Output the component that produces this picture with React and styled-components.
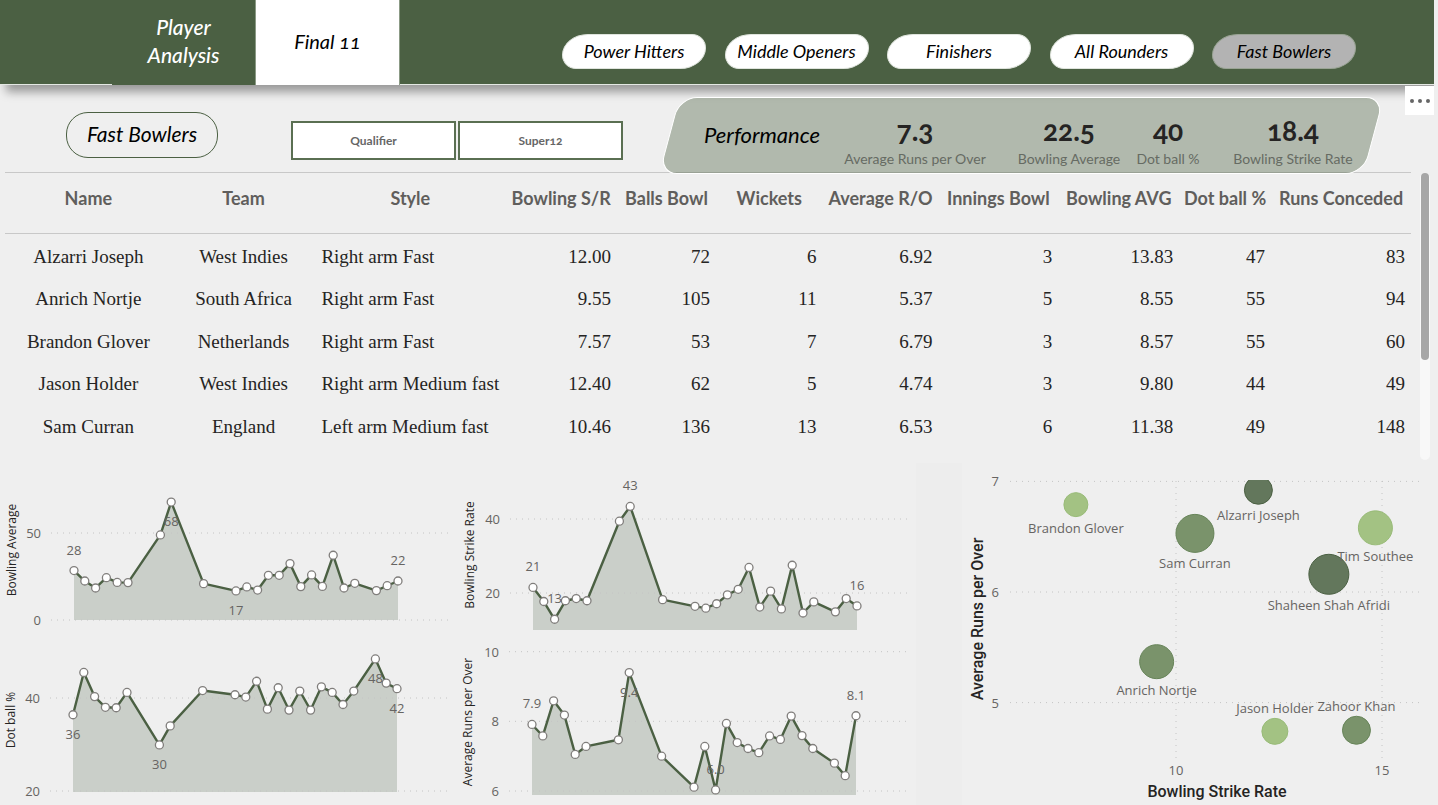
import React from "react";
import styled, { createGlobalStyle } from "styled-components";

const HUMANIST = 'Lato, "Open Sans", sans-serif';
const CHART = '"Open Sans", "Noto Sans", sans-serif';
const GREEN = "#4b6043";

const Global = createGlobalStyle`
  * { box-sizing: border-box; }
  body { margin: 0; background: #efefef; overflow-x: hidden; }
  button { margin: 0; padding: 0; cursor: pointer; }
`;

const Page = styled.div`
  padding-right: 4px;
  background: #efefef;
  font-family: ${HUMANIST};
  overflow: hidden;
`;

const Header = styled.header`
  position: relative;
  display: flex;
  justify-content: space-between;
  height: 85px;
  padding: 0 78px 0 112px;
  background: ${GREEN};
  border-bottom: 1px solid #e4e8e3;
  box-shadow: 6px 7px 9px rgba(0, 0, 0, 0.36);
  clip-path: inset(0 0 -30px 0);
`;

const Tabs = styled.nav`
  display: flex;
  margin-bottom: -1px;
`;

const Tab = styled.button`
  width: 144px;
  padding: 0 32px 4px;
  border: 0;
  border-right: 1px solid #8b9a85;
  background: ${(p) => (p.$active ? "#fff" : GREEN)};
  color: ${(p) => (p.$active ? "#000" : "#fff")};
  font: italic ${(p) => (p.$active ? 400 : 500)} ${(p) => (p.$active ? 20 : 21)}px / 28px ${HUMANIST};
  font-variant-numeric: oldstyle-nums;
`;

const RoleNav = styled.nav`
  display: flex;
  justify-content: space-between;
  align-items: flex-start;
  width: 794px;
  padding-top: 34px;
`;

const RoleButton = styled.button`
  width: 144px;
  height: 35px;
  border: 1px solid ${(p) => (p.$active ? "#9aa495" : "#dfe4dd")};
  border-radius: 26px 14px 26px 14px / 21px 14px 21px 14px;
  background: ${(p) => (p.$active ? "#b3b3b3" : "#fff")};
  color: #000;
  font: italic 400 18px / 33px ${HUMANIST};
  white-space: nowrap;
`;

const Toolbar = styled.section`
  position: relative;
  display: flex;
  align-items: flex-start;
  height: 87px;
  padding: 12px 54px 0 66px;
`;

const Title = styled.h1`
  width: 152px;
  height: 46px;
  margin: 15px 73px 0 0;
  border: 1px solid ${GREEN};
  border-radius: 22px;
  color: #000;
  font: italic 400 21px / 42px ${HUMANIST};
  text-align: center;
`;

const Slicer = styled.div`
  display: flex;
  gap: 2px;
  margin-top: 24px;
`;

const SlicerButton = styled.button`
  width: 165px;
  height: 39px;
  border: 2px solid #5a6f52;
  background: #fff;
  color: #666;
  font: 700 12px / 35px ${HUMANIST};
  font-variant-numeric: oldstyle-nums;
`;

const Performance = styled.div`
  position: relative;
  z-index: 1;
  display: flex;
  align-items: flex-start;
  width: 717px;
  height: 77px;
  margin-left: auto;
  padding: 17px 24px 0 41px;
  &::before {
    content: "";
    position: absolute;
    z-index: -1;
    inset: 0 6px;
    border: 1px solid #fff;
    border-radius: 18px;
    background: rgba(75, 96, 67, 0.38);
    transform: skewX(-15deg);
  }
`;

const PerformanceTitle = styled.h2`
  width: 138px;
  margin: 0;
  color: #000;
  font: italic 400 22px / 42px ${HUMANIST};
`;

const Kpi = styled.div`
  width: ${(p) => p.$width}px;
  margin-left: ${(p) => p.$gap}px;
  text-align: center;
  white-space: nowrap;
`;

const KpiValue = styled.div`
  color: #252423;
  font: 700 28px / 32px ${HUMANIST};
  font-variant-numeric: oldstyle-nums;
`;

const KpiLabel = styled.div`
  color: #666b63;
  font: 400 14px / 26px ${HUMANIST};
`;

const MoreButton = styled.button`
  position: absolute;
  top: 1px;
  right: 0;
  display: flex;
  align-items: center;
  justify-content: center;
  gap: 4px;
  width: 29px;
  height: 29px;
  border: 0;
  background: #fff;
`;

const Dot = styled.span`
  width: 4px;
  height: 4px;
  border-radius: 2px;
  background: #666;
`;

const TableSection = styled.section`
  display: flex;
  height: 291px;
  padding: 0 4px 3px 5px;
`;

const Table = styled.table`
  flex: 1;
  align-self: flex-start;
  table-layout: fixed;
  border-collapse: separate;
  border-spacing: 0;
  border-top: 1px solid #c8c8c8;
`;

const Th = styled.th`
  height: 61px;
  padding: 14px 0 0;
  border-bottom: 1px solid #c8c8c8;
  color: #605e5c;
  font: 700 18px / 22px ${HUMANIST};
  vertical-align: top;
  white-space: nowrap;
`;

const Tr = styled.tr`
  height: 42px;
  &:nth-child(even) { height: 43px; }
`;

const Td = styled.td`
  padding: 13px 6px 0;
  color: #252423;
  font: 400 19px / 20px "Liberation Serif", serif;
  text-align: ${(p) => p.$align};
  vertical-align: top;
  white-space: nowrap;
`;

const ScrollTrack = styled.div`
  width: 10px;
  margin: 1px 0 0 9px;
  padding: 0 1px;
  border-radius: 5px;
  background: #f8f8f8;
`;

const ScrollThumb = styled.div`
  height: 187px;
  border-radius: 4px;
  background: #a6a6a6;
`;

const Charts = styled.section`
  display: grid;
  grid-template-columns: 916fr 518fr;
`;

const LineGrid = styled.div`
  display: grid;
  grid-template-columns: 1fr 1fr;
`;

const ScatterCell = styled.div`
  padding-left: 46px;
  background: #ededed;
`;

const ChartSvg = styled.svg`
  display: block;
  width: 100%;
  height: ${(p) => p.$height}px;
  background: #efefef;
  font-family: ${CHART};
  font-size: 13px;
`;

const Gridline = styled.line`
  stroke: #c4c4c4;
  stroke-dasharray: 1 5;
`;

const ChartText = styled.text`
  fill: #666462;
`;

const AxisTitle = styled.text`
  fill: #252423;
  font-size: 12px;
  text-anchor: middle;
`;

const BoldAxisTitle = styled(AxisTitle)`
  font-family: Roboto, sans-serif;
  font-size: 16px;
  font-weight: 500;
`;

const roles = ["Power Hitters", "Middle Openers", "Finishers", "All Rounders", "Fast Bowlers"];

const kpis = [
  { value: "7.3", label: "Average Runs per Over", width: 146, gap: 0 },
  { value: "22.5", label: "Bowling Average", width: 106, gap: 28 },
  { value: "40", label: "Dot ball %", width: 64, gap: 14 },
  { value: "18.4", label: "Bowling Strike Rate", width: 124, gap: 31 },
];

const columns = [
  ["Name", 167, "center"],
  ["Team", 144, "center"],
  ["Style", 188, "left"],
  ["Bowling S/R", 112, "right"],
  ["Balls Bowl", 99, "right"],
  ["Wickets", 107, "right"],
  ["Average R/O", 116, "right"],
  ["Innings Bowl", 120, "right"],
  ["Bowling AVG", 121, "right"],
  ["Dot ball %", 92, "right"],
  ["Runs Conceded", 140, "right"],
];

const rows = [
  ["Alzarri Joseph", "West Indies", "Right arm Fast", "12.00", "72", "6", "6.92", "3", "13.83", "47", "83"],
  ["Anrich Nortje", "South Africa", "Right arm Fast", "9.55", "105", "11", "5.37", "5", "8.55", "55", "94"],
  ["Brandon Glover", "Netherlands", "Right arm Fast", "7.57", "53", "7", "6.79", "3", "8.57", "55", "60"],
  ["Jason Holder", "West Indies", "Right arm Medium fast", "12.40", "62", "5", "4.74", "3", "9.80", "44", "49"],
  ["Sam Curran", "England", "Left arm Medium fast", "10.46", "136", "13", "6.53", "6", "11.38", "49", "148"],
];

// Match numbers in which the bowlers of this group played.
const matches = [0, 1, 2, 3, 4, 5, 8, 9, 12, 15, 16, 17, 18, 19, 20, 21, 22, 23, 24, 25, 26, 28, 29, 30];

const lineCharts = [
  {
    title: "Bowling Average", height: 177, left: 74, titleX: 16, titleY: 87, ticks: [50, 0],
    origin: 157, originValue: 0, unit: 1.74, base: 157,
    values: [28.4, 22.4, 18.4, 24.3, 21.6, 21.5, 48.9, 67.8, 20.9, 16.7, 19, 17.2, 25.7, 25.7, 32.4, 19.2, 25.9, 19.3, 37.2, 18.4, 21.1, 16.9, 19.7, 22.4],
    labels: [[0, "28", -1], [7, "68", 1], [9, "17", 1], [23, "22", -1]],
  },
  {
    title: "Bowling Strike Rate", height: 177, left: 75, titleX: 16, titleY: 92, ticks: [40, 20],
    origin: 130, originValue: 20, unit: 3.7, base: 167,
    values: [21.5, 17.7, 12.9, 17.9, 18.5, 17.9, 39.4, 43.4, 18.2, 16.4, 15.9, 17.1, 19.5, 21, 26.9, 16.2, 20.5, 15.7, 27.5, 14.6, 17.6, 14.9, 18.5, 16.5],
    labels: [[0, "21", -1], [2, "13", -1], [7, "43", -1], [23, "16", -1]],
  },
  {
    title: "Dot ball %", height: 165, left: 73, titleX: 15, titleY: 80, ticks: [40, 20],
    origin: 151, originValue: 20, unit: 4.65, base: 152,
    values: [36.4, 45.5, 40.3, 38, 37.9, 41.2, 29.9, 34, 41.6, 40.7, 40.2, 43.6, 37.6, 42.2, 37.4, 41.5, 37.4, 42.4, 41.2, 38.6, 41.5, 48.4, 43.2, 42],
    labels: [[0, "36", 1], [6, "30", 1], [21, "48", 1], [23, "42", 1]],
  },
  {
    title: "Average Runs per Over", height: 165, left: 74, titleX: 14, titleY: 82, ticks: [10, 8, 6],
    origin: 151, originValue: 6, unit: 34.83, base: 155,
    values: [7.91, 7.58, 8.59, 8.18, 7.05, 7.28, 7.47, 9.4, 7, 6.11, 7.28, 6.03, 7.94, 7.39, 7.22, 7.1, 7.58, 7.48, 8.15, 7.59, 7.22, 6.8, 6.44, 8.16],
    labels: [[0, "7.9", -1], [7, "9.4", 1], [11, "6.0", -1], [23, "8.1", -1]],
  },
];

const LIGHT = ["#a3c283", "#98bb77"];
const MID = ["#7a936b", "#678459"];
const DARK = ["#63775c", "#4b6043"];

const bubbles = [
  { name: "Brandon Glover", x: 7.57, y: 6.79, r: 12, tone: LIGHT },
  { name: "Sam Curran", x: 10.46, y: 6.53, r: 19, tone: MID },
  { name: "Alzarri Joseph", x: 12, y: 6.92, r: 14, tone: DARK },
  { name: "Tim Southee", x: 14.84, y: 6.58, r: 17, tone: LIGHT },
  { name: "Shaheen Shah Afridi", x: 13.71, y: 6.16, r: 20, tone: DARK },
  { name: "Anrich Nortje", x: 9.53, y: 5.37, r: 17, tone: MID },
  { name: "Jason Holder", x: 12.4, y: 4.74, r: 13, tone: LIGHT, above: true },
  { name: "Zahoor Khan", x: 14.38, y: 4.75, r: 14, tone: MID, above: true },
];

function LineChart({ title, height, left, titleX, titleY, ticks, origin, originValue, unit, base, values, labels }) {
  const y = (v) => origin - (v - originValue) * unit;
  const points = values.map((v, i) => [left + matches[i] * 10.8, y(v)]);
  const line = points.map((p) => p.join(",")).join(" ");
  const last = points[points.length - 1][0];
  return (
    <ChartSvg $height={height} viewBox={`0 0 458 ${height}`} role="img" aria-label={title}>
      <polygon points={`${left},${base} ${line} ${last},${base}`} fill="#4b6043" fillOpacity="0.22" />
      {ticks.map((t) => (
        <g key={t}>
          <Gridline x1={left - 23} x2={left + 378} y1={y(t)} y2={y(t)} />
          <ChartText x={left - 33} y={y(t) + 5} textAnchor="end">{t}</ChartText>
        </g>
      ))}
      <polyline points={line} fill="none" stroke="#4b6043" strokeWidth="2.4" strokeLinejoin="round" />
      {points.map(([cx, cy]) => (
        <circle key={cx} cx={cx} cy={cy} r="4" fill="#fff" stroke="#807e7c" strokeWidth="1.3" />
      ))}
      {labels.map(([i, text, side]) => (
        <ChartText key={text} x={points[i][0]} y={points[i][1] + 4 + side * 20} textAnchor="middle">{text}</ChartText>
      ))}
      <AxisTitle transform={`translate(${titleX} ${titleY}) rotate(-90)`}>{title}</AxisTitle>
    </ChartSvg>
  );
}

function ScatterChart() {
  const x = (v) => 214 + (v - 10) * 41.2;
  const y = (v) => 129 - (v - 6) * 110.6;
  return (
    <ChartSvg $height={342} viewBox="0 0 472 342" role="img" aria-label="Average Runs per Over by Bowling Strike Rate">
      <clipPath id="plot"><rect x="48" y="17" width="424" height="280" /></clipPath>
      {[7, 6, 5].map((t) => (
        <g key={t}>
          <Gridline x1="48" x2="460" y1={y(t)} y2={y(t)} />
          <ChartText x="37" y={y(t) + 5} textAnchor="end">{t}</ChartText>
        </g>
      ))}
      {[10, 15].map((t) => (
        <g key={t}>
          <Gridline x1={x(t)} x2={x(t)} y1="18" y2="296" />
          <ChartText x={x(t)} y="312" textAnchor="middle">{t}</ChartText>
        </g>
      ))}
      <g clipPath="url(#plot)">
        {bubbles.map((b) => (
          <circle key={b.name} cx={x(b.x)} cy={y(b.y)} r={b.r} fill={b.tone[0]} stroke={b.tone[1]} />
        ))}
      </g>
      {bubbles.map((b) => (
        <ChartText key={b.name} x={x(b.x)} y={b.above ? y(b.y) - b.r - 5 : y(b.y) + b.r + 16} textAnchor="middle">{b.name}</ChartText>
      ))}
      <BoldAxisTitle transform="translate(21 156) rotate(-90)">Average Runs per Over</BoldAxisTitle>
      <BoldAxisTitle x="255" y="334">Bowling Strike Rate</BoldAxisTitle>
    </ChartSvg>
  );
}

export default function App() {
  return (
    <Page>
      <Global />
      <Header>
        <Tabs aria-label="Pages">
          <Tab type="button">Player Analysis</Tab>
          <Tab type="button" $active aria-current="page">Final 11</Tab>
        </Tabs>
        <RoleNav aria-label="Player roles">
          {roles.map((r) => (
            <RoleButton key={r} type="button" $active={r === "Fast Bowlers"}>{r}</RoleButton>
          ))}
        </RoleNav>
      </Header>
      <Toolbar>
        <Title>Fast Bowlers</Title>
        <Slicer>
          <SlicerButton type="button">Qualifier</SlicerButton>
          <SlicerButton type="button">Super12</SlicerButton>
        </Slicer>
        <Performance>
          <PerformanceTitle>Performance</PerformanceTitle>
          {kpis.map((k) => (
            <Kpi key={k.label} $width={k.width} $gap={k.gap}>
              <KpiValue>{k.value}</KpiValue>
              <KpiLabel>{k.label}</KpiLabel>
            </Kpi>
          ))}
        </Performance>
        <MoreButton type="button" aria-label="More options"><Dot /><Dot /><Dot /></MoreButton>
      </Toolbar>
      <TableSection>
        <Table>
          <colgroup>
            {columns.map(([name, width]) => <col key={name} width={width} />)}
          </colgroup>
          <thead>
            <tr>{columns.map(([name]) => <Th key={name} scope="col">{name}</Th>)}</tr>
          </thead>
          <tbody>
            {rows.map((row) => (
              <Tr key={row[0]}>
                {row.map((cell, i) => <Td key={columns[i][0]} $align={columns[i][2]}>{cell}</Td>)}
              </Tr>
            ))}
          </tbody>
        </Table>
        <ScrollTrack><ScrollThumb /></ScrollTrack>
      </TableSection>
      <Charts>
        <LineGrid>
          {lineCharts.map((c) => <LineChart key={c.title} {...c} />)}
        </LineGrid>
        <ScatterCell><ScatterChart /></ScatterCell>
      </Charts>
    </Page>
  );
}
